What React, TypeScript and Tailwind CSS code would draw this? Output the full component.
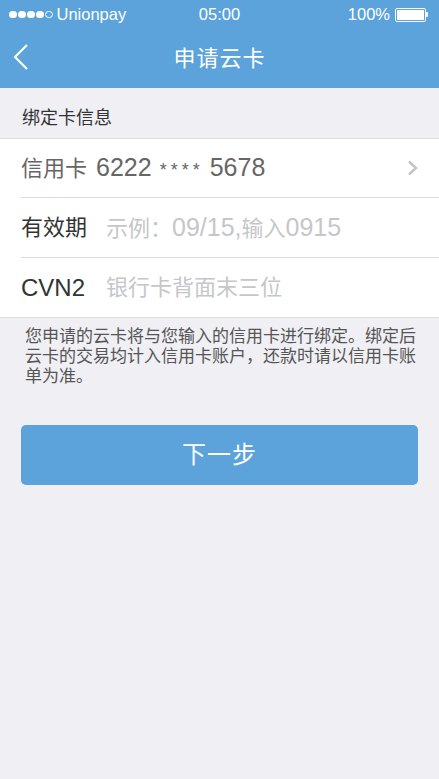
const font = "font-['Helvetica','Liberation_Sans','Noto_Sans_CJK_SC',sans-serif]"

function BackIcon() {
  return (
    <svg width="18" height="28" viewBox="0 0 18 28" fill="none">
      <path d="M15 2 L3 14 L15 26" stroke="white" strokeWidth="2.2" />
    </svg>
  )
}

function Chevron() {
  return (
    <svg width="12" height="16" viewBox="0 0 12 16" fill="none">
      <path d="M2 1.5 L9 8 L2 14.5" stroke="#c4c4c8" strokeWidth="2.4" />
    </svg>
  )
}

function Battery() {
  return (
    <div className="flex items-center">
      <div className="h-[14px] w-[31px] rounded-[2px] border border-white p-[1px]">
        <div className="h-full w-full bg-white" />
      </div>
      <div className="h-[5px] w-[2px] rounded-r-[1px] bg-white" />
    </div>
  )
}

function Signal() {
  return (
    <div className="flex items-center gap-[1.5px]">
      {[0, 1, 2, 3].map((i) => (
        <span key={i} className="size-[7.5px] rounded-full bg-white" />
      ))}
      <span className="size-[7.5px] rounded-full border border-white" />
    </div>
  )
}

export default function App() {
  return (
    <div className={`flex h-[779px] w-[439px] flex-col bg-[#efeff4] ${font}`}>
      <header className="bg-[#5ba3da] text-white">
        <div className="relative flex h-[29px] items-center justify-between pl-[9px] pr-[11px] text-[16.5px]">
          <div className="flex items-center gap-[4px]">
            <Signal />
            <span>Unionpay</span>
          </div>
          <span className="absolute left-1/2 -translate-x-1/2 text-[16.5px] font-medium">05:00</span>
          <div className="flex items-center gap-[5px]">
            <span>100%</span>
            <Battery />
          </div>
        </div>
        <div className="relative flex h-[59px] items-center justify-center">
          <button className="absolute left-[12px] top-[14px]">
            <BackIcon />
          </button>
          <h1 className="text-[22px] tracking-[1px]">申请云卡</h1>
        </div>
      </header>

      <div className="flex h-[50px] items-center px-[22px] pt-[10px] text-[18px] text-[#333]">
        绑定卡信息
      </div>

      <div className="border-y border-[#dcdce0] bg-white">
        <div className="ml-[21px] flex h-[59px] items-center justify-between border-b border-[#dcdce0] pr-[20px]">
          <div className="flex items-baseline text-[22px] text-[#666]">
            <span>信用卡</span>
            <span className="ml-[9px] text-[25px]">6222</span>
            <span className="ml-[8px] mr-[6px] text-[18px] tracking-[4px]">****</span>
            <span className="text-[25px]">5678</span>
          </div>
          <Chevron />
        </div>
        <div className="ml-[21px] flex h-[60px] items-center border-b border-[#dcdce0] text-[22px]">
          <span className="w-[85px] text-[#333]">有效期</span>
          <span className="text-[#c6c6ca]">
            示例：<span className="text-[25px]">09/15,</span>输入<span className="text-[25px]">0915</span>
          </span>
        </div>
        <div className="ml-[21px] flex h-[59px] items-center text-[22px]">
          <span className="w-[85px] text-[24px] text-[#333]">CVN2</span>
          <span className="text-[#c6c6ca]">银行卡背面末三位</span>
        </div>
      </div>

      <p className="pl-[25px] pr-[18px] pt-[9px] text-[17px] leading-[20px] text-[#555]">
        您申请的云卡将与您输入的信用卡进行绑定。绑定后云卡的交易均计入信用卡账户，还款时请以信用卡账单为准。
      </p>

      <div className="px-[21px] pt-[38px]">
        <button className="flex h-[60px] w-full items-center justify-center rounded-[5px] bg-[#5ba3da] text-[24px] tracking-[1px] text-white">
          下一步
        </button>
      </div>
    </div>
  )
}
